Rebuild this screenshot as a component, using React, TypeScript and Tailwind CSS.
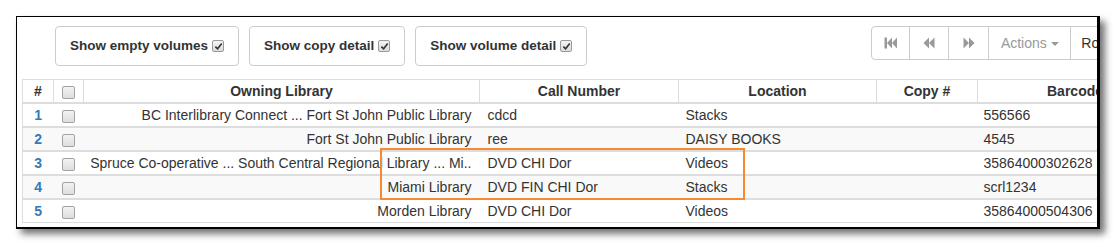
import React from "react";

const rows = [
  { n: 1, lib: "BC Interlibrary Connect ... Fort St John Public Library", call: "cdcd", loc: "Stacks", copy: "", bc: "556566" },
  { n: 2, lib: "Fort St John Public Library", call: "ree", loc: "DAISY BOOKS", copy: "", bc: "4545" },
  { n: 3, lib: "Spruce Co-operative ... South Central Regional Library ... Mi..", call: "DVD CHI Dor", loc: "Videos", copy: "", bc: "35864000302628" },
  { n: 4, lib: "Miami Library", call: "DVD FIN CHI Dor", loc: "Stacks", copy: "", bc: "scrl1234" },
  { n: 5, lib: "Morden Library", call: "DVD CHI Dor", loc: "Videos", copy: "", bc: "35864000504306" },
];

function CheckedBox() {
  return (
    <span className="inline-flex h-[12px] w-[12px] shrink-0 items-center justify-center rounded-[2px] border border-[#9a9a9a] bg-gradient-to-b from-[#f4f4f4] to-[#dcdcdc]">
      <svg viewBox="0 0 10 10" className="h-[9px] w-[9px]">
        <path d="M1.5 5.2 L4 7.6 L8.6 1.8" fill="none" stroke="#333" strokeWidth="1.8" />
      </svg>
    </span>
  );
}

function RowBox() {
  return <span className="inline-block h-[13px] w-[13px] rounded-[2px] border border-[#a3a3a3] bg-gradient-to-b from-[#f2f2f2] to-[#dedede] align-middle" />;
}

function ToggleButton({ label }: { label: string }) {
  return (
    <div className="flex h-[40px] shrink-0 items-center gap-[4px] whitespace-nowrap rounded-[4px] border border-[#ccc] bg-white px-[14px] text-[13.5px] font-bold text-[#333]">
      <span>{label}</span>
      <CheckedBox />
    </div>
  );
}

function Icon({ kind }: { kind: "first" | "prev" | "next" }) {
  return (
    <svg viewBox="0 0 14 12" className="h-[12px] w-[14px]" fill="#999">
      {kind === "first" && (
        <>
          <rect x="0.5" y="0.5" width="2.5" height="11" />
          <path d="M3 6 L8 0.5 L8 11.5 Z" />
          <path d="M8 6 L13 0.5 L13 11.5 Z" />
        </>
      )}
      {kind === "prev" && (
        <>
          <path d="M1.5 6 L7 0.5 L7 11.5 Z" />
          <path d="M7 6 L12.5 0.5 L12.5 11.5 Z" />
        </>
      )}
      {kind === "next" && (
        <>
          <path d="M1.5 0.5 L7 6 L1.5 11.5 Z" />
          <path d="M7 0.5 L12.5 6 L7 11.5 Z" />
        </>
      )}
    </svg>
  );
}

export default function App() {
  return (
    <div className="h-[247px] w-[1117px] bg-white p-4 font-['Liberation_Sans',Arial,sans-serif]">
      <div className="relative h-[213px] w-[1084px] overflow-hidden border border-r-[3px] border-b-[2px] border-black bg-white shadow-[5px_5px_7px_rgba(0,0,0,0.55)]">
        {/* toolbar */}
        <div className="flex w-[1300px] items-start pl-[38px] pt-[9px]">
          <div className="flex shrink-0 gap-[10px]">
            <ToggleButton label="Show empty volumes" />
            <ToggleButton label="Show copy detail" />
            <ToggleButton label="Show volume detail" />
          </div>
          <div className="ml-[284px] flex h-[34px] shrink-0 rounded-[4px] border border-[#ccc] text-[14px]">
            <div className="flex w-[38px] items-center justify-center border-r border-[#ccc]"><Icon kind="first" /></div>
            <div className="flex w-[39px] items-center justify-center border-r border-[#ccc]"><Icon kind="prev" /></div>
            <div className="flex w-[40px] items-center justify-center border-r border-[#ccc]"><Icon kind="next" /></div>
            <div className="flex w-[82px] items-center justify-center gap-[4px] border-r border-[#ccc] text-[#999]">
              Actions
              <span className="mt-[1px] h-0 w-0 border-x-[4px] border-t-[4px] border-x-transparent border-t-[#999]" />
            </div>
            <div className="flex w-[80px] items-center pl-[10px] text-[#333]">Rows</div>
          </div>
        </div>

        {/* grid */}
        <table className="ml-[5px] mt-[13px] w-[1200px] table-fixed border-collapse text-[14px] leading-[20px] text-[#333]">
          <colgroup>
            <col className="w-[31px]" />
            <col className="w-[30px]" />
            <col className="w-[396px]" />
            <col className="w-[199px]" />
            <col className="w-[198px]" />
            <col className="w-[101px]" />
            <col className="w-[245px]" />
          </colgroup>
          <thead>
            <tr className="border-t border-[#ddd]">
              <th className="border-x border-b-2 border-[#ddd] py-[1px] text-center font-bold">#</th>
              <th className="border-x border-b-2 border-[#ddd] py-[1px] text-center"><RowBox /></th>
              <th className="border-x border-b-2 border-[#ddd] py-[1px] text-center font-bold">Owning Library</th>
              <th className="border-x border-b-2 border-[#ddd] py-[1px] text-center font-bold">Call Number</th>
              <th className="border-x border-b-2 border-[#ddd] py-[1px] text-center font-bold">Location</th>
              <th className="border-x border-b-2 border-[#ddd] py-[1px] text-center font-bold">Copy #</th>
              <th className="border-x border-b-2 border-[#ddd] py-[1px] pl-[69px] text-left font-bold">Barcode</th>
            </tr>
          </thead>
          <tbody>
            {rows.map((r, i) => (
              <tr key={r.n} className={`${i === rows.length - 1 ? "border-b" : "border-b-2"} border-[#ddd] ${i % 2 === 1 ? "bg-[#f9f9f9]" : "bg-white"}`}>
                <td className="border-l border-[#ddd] py-[1px] text-center font-bold text-[#337ab7]">{r.n}</td>
                <td className="py-[1px] text-center"><RowBox /></td>
                <td className="truncate py-[1px] pr-[8px] text-right">{r.lib}</td>
                <td className="py-[1px] pl-[8px]">{r.call}</td>
                <td className="py-[1px] pl-[7px]">{r.loc}</td>
                <td className="py-[1px] pl-[7px]">{r.copy}</td>
                <td className="py-[1px] pl-[6px]">{r.bc}</td>
              </tr>
            ))}
          </tbody>
        </table>

        {/* highlight */}
        <div className="pointer-events-none absolute left-[363px] top-[131px] h-[52px] w-[365px] border-[2px] border-[#f58a33]" />
      </div>
    </div>
  );
}
